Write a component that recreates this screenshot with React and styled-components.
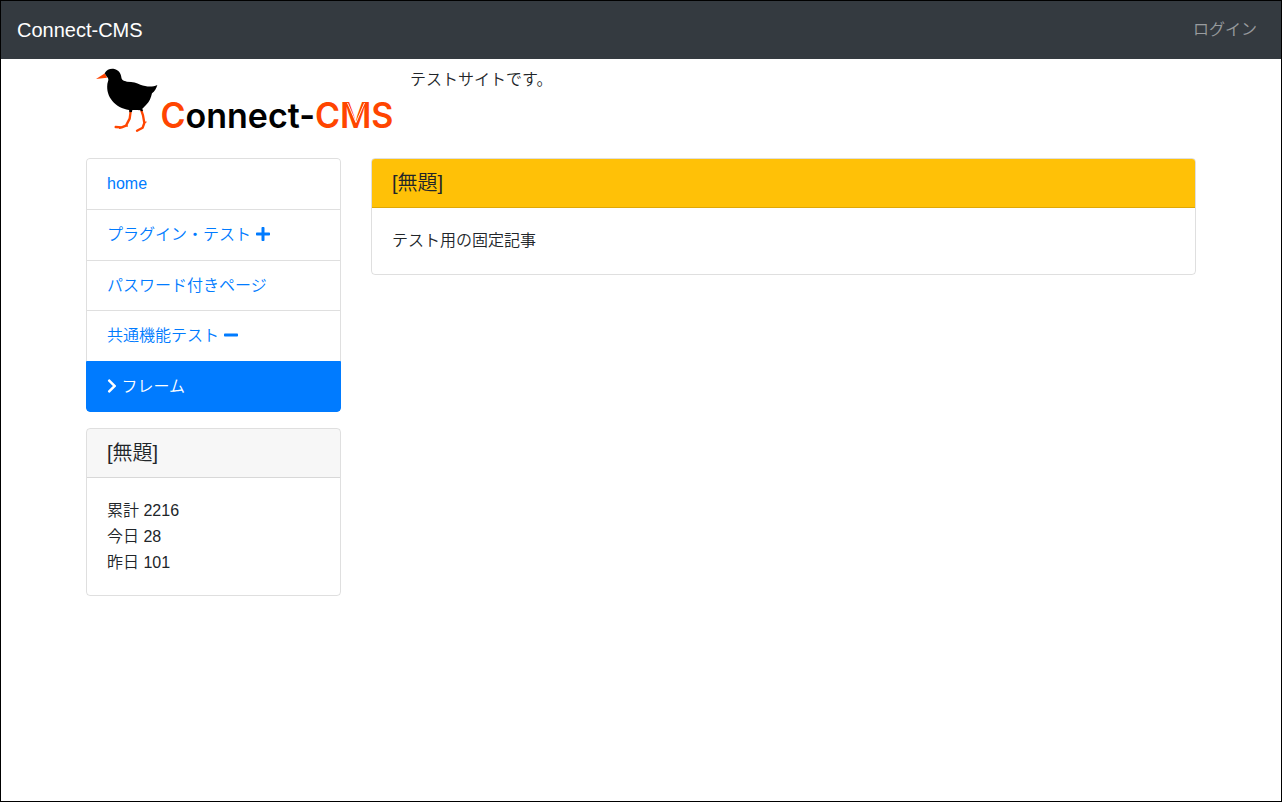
import React from "react";
import styled, { createGlobalStyle } from "styled-components";
import { FaPlus, FaMinus, FaChevronRight } from "react-icons/fa";

const GlobalStyle = createGlobalStyle`
  *, *::before, *::after { box-sizing: border-box; }
  body {
    margin: 0;
    background: #fff;
    color: #212529;
    font-family: "Liberation Sans", "Noto Sans CJK JP", sans-serif;
    font-size: 16px;
    font-weight: 350;
    line-height: 1.6;
  }
`;

const Page = styled.div`
  height: 802px;
  border: 1px solid #000;
  overflow: hidden;
`;

const Navbar = styled.nav`
  display: flex;
  align-items: center;
  justify-content: space-between;
  height: 58px;
  padding: 8px 16px;
  background: #343a40;
`;

const Brand = styled.a`
  color: #fff;
  font-size: 20px;
  line-height: 32px;
`;

const NavLink = styled.a`
  padding: 8px;
  color: rgba(255, 255, 255, 0.5);
`;

const Container = styled.div`
  width: 1140px;
  margin: 0 auto;
  padding: 0 15px;
`;

const SiteHeader = styled.header`
  display: flex;
  align-items: flex-start;
  gap: 15px;
  height: 99.4px;
  padding: 7px 0 0 9px;
`;

const SiteText = styled.p`
  margin: 1px 0 0;
`;

const Columns = styled.div`
  display: grid;
  grid-template-columns: 255px 1fr;
  gap: 30px;
  align-items: start;
`;

const Sidebar = styled.aside`
  display: flex;
  flex-direction: column;
  gap: 16px;
`;

const Menu = styled.div`
  border-radius: 4px;
  overflow: hidden;
`;

const MenuItem = styled.a`
  display: block;
  padding: 12px 20px;
  border: 1px solid ${(p) => (p.$active ? "#007bff" : "rgba(0, 0, 0, 0.125)")};
  border-bottom-width: ${(p) => (p.$active ? "1px" : "0")};
  background: ${(p) => (p.$active ? "#007bff" : "#fff")};
  color: ${(p) => (p.$active ? "#fff" : "#007bff")};

  &:first-child { border-radius: 4px 4px 0 0; }
  &:last-child { border-radius: 0 0 4px 4px; }

  svg {
    width: ${(p) => (p.$active ? "10px" : "14px")};
    height: 16px;
    margin-left: ${(p) => (p.$active ? "0" : "1px")};
    vertical-align: -2px;
  }
`;

const Card = styled.section`
  border: 1px solid rgba(0, 0, 0, 0.125);
  border-radius: 4px;
`;

const CardHeader = styled.h1`
  margin: 0;
  padding: 12px 20px;
  border-bottom: 1px solid rgba(0, 0, 0, 0.125);
  border-radius: 3px 3px 0 0;
  background: ${(p) => (p.$warning ? "#ffc107" : "rgba(0, 0, 0, 0.03)")};
  font-size: 20px;
  font-weight: 350;
  line-height: 24px;
`;

const CardBody = styled.div`
  padding: 20px;
`;

const LogoSvg = styled.svg`
  flex: none;
  overflow: visible;
`;

const Wordmark = styled.text`
  font-family: Inter, sans-serif;
  font-weight: 600;
  font-size: 34.8px;
  fill: #000;
`;

const Accent = styled.tspan`
  fill: #ff4500;
`;

function Logo() {
  return (
    <LogoSvg width="300" height="76" viewBox="0 0 300 76" role="img" aria-label="Connect-CMS">
      <g transform="translate(-10 -6) scale(0.33333)">
        <path d="M60 40 L33 57 L66 53Z" fill="#ff4500" />
        <path
          d="M59 40 C65 29 76 25 88 27 C101 30 108 40 109 52 C110 61 116 63 126 65 C144 66 155 68 166 74 C183 80 201 82 217 75 C214 85 209 94 201 100 C198 114 193 126 183 135 C176 143 170 149 163 151 C151 148 143 152 132 150 C112 147 94 137 82 123 C70 109 65 91 67 73 C68 64 74 58 66 51 Z"
          fill="#000"
        />
        <g fill="none" stroke="#ff4500" strokeWidth="7" strokeLinejoin="round" strokeLinecap="round">
          <path d="M137 154 L134 176 L123 197 L110 202 L92 201" />
          <path d="M123 197 L127 198 M110 202 L104 205" strokeWidth="4" />
          <path d="M169 151 L174 166 L178 189 L173 203 L156 212" />
          <path d="M177 189 L183 186" strokeWidth="4" />
        </g>
        <path d="M132 145 L142 147 L141 156 L133 157Z M163 146 L172 146 L174 153 L168 154Z" fill="#000" />
      </g>
      <Wordmark x="65.5" y="62" textLength="233" lengthAdjust="spacingAndGlyphs">
        <Accent>C</Accent>onnect-<Accent>CMS</Accent>
      </Wordmark>
      <path d="M252.5 37 L261 56.5 L269.5 37" fill="none" stroke="#fff" strokeWidth="0.9" />
    </LogoSvg>
  );
}

export default function App() {
  return (
    <>
      <GlobalStyle />
      <Page>
        <Navbar>
          <Brand>Connect-CMS</Brand>
          <NavLink>ログイン</NavLink>
        </Navbar>
        <Container>
          <SiteHeader>
            <Logo />
            <SiteText>テストサイトです。</SiteText>
          </SiteHeader>
          <Columns>
            <Sidebar>
              <Menu>
                <MenuItem>home</MenuItem>
                <MenuItem>プラグイン・テスト <FaPlus /></MenuItem>
                <MenuItem>パスワード付きページ</MenuItem>
                <MenuItem>共通機能テスト <FaMinus /></MenuItem>
                <MenuItem $active><FaChevronRight /> フレーム</MenuItem>
              </Menu>
              <Card>
                <CardHeader>[無題]</CardHeader>
                <CardBody>
                  累計 2216<br />
                  今日 28<br />
                  昨日 101
                </CardBody>
              </Card>
            </Sidebar>
            <Card>
              <CardHeader $warning>[無題]</CardHeader>
              <CardBody>テスト用の固定記事</CardBody>
            </Card>
          </Columns>
        </Container>
      </Page>
    </>
  );
}
